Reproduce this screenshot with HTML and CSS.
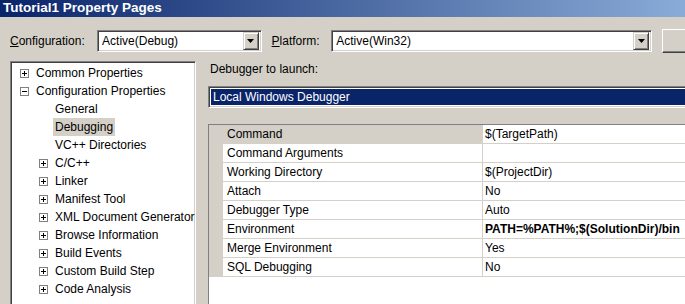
FILE: index.html
```html
<!DOCTYPE html>
<html lang="en">
  <head>
    <meta charset="UTF-8" />
    <title>Tutorial1 Property Pages</title>
    <link rel="stylesheet" href="styles.css">
  </head>
  <body>
    <div class="window">
      <div class="titlebar">Tutorial1 Property Pages</div>

      <div class="toolbar">
        <label class="lbl lbl-config"><u>C</u>onfiguration:</label>
        <div class="combo combo-config">
          <span class="combo-text">Active(Debug)</span>
          <span class="drop"><svg width="7" height="4" viewBox="0 0 7 4"><path d="M0 0h7L3.5 4z" fill="#000"/></svg></span>
        </div>
        <label class="lbl lbl-platform"><u>P</u>latform:</label>
        <div class="combo combo-platform">
          <span class="combo-text">Active(Win32)</span>
          <span class="drop"><svg width="7" height="4" viewBox="0 0 7 4"><path d="M0 0h7L3.5 4z" fill="#000"/></svg></span>
        </div>
        <button class="btn" type="button"></button>
      </div>

      <div class="main">
        <div class="tree">
          <div class="node lvl0"><svg class="exp" width="9" height="9" viewBox="0 0 9 9"><rect x="0.5" y="0.5" width="8" height="8" fill="#fff" stroke="#808080"/><path d="M2 4.5h5M4.5 2v5" stroke="#000"/></svg><span>Common Properties</span></div>
          <div class="node lvl0"><svg class="exp" width="9" height="9" viewBox="0 0 9 9"><rect x="0.5" y="0.5" width="8" height="8" fill="#fff" stroke="#808080"/><path d="M2 4.5h5" stroke="#000"/></svg><span>Configuration Properties</span></div>
          <div class="node leaf"><span>General</span></div>
          <div class="node leaf"><span class="sel">Debugging</span></div>
          <div class="node leaf"><span>VC++ Directories</span></div>
          <div class="node lvl1"><svg class="exp" width="9" height="9" viewBox="0 0 9 9"><rect x="0.5" y="0.5" width="8" height="8" fill="#fff" stroke="#808080"/><path d="M2 4.5h5M4.5 2v5" stroke="#000"/></svg><span>C/C++</span></div>
          <div class="node lvl1"><svg class="exp" width="9" height="9" viewBox="0 0 9 9"><rect x="0.5" y="0.5" width="8" height="8" fill="#fff" stroke="#808080"/><path d="M2 4.5h5M4.5 2v5" stroke="#000"/></svg><span>Linker</span></div>
          <div class="node lvl1"><svg class="exp" width="9" height="9" viewBox="0 0 9 9"><rect x="0.5" y="0.5" width="8" height="8" fill="#fff" stroke="#808080"/><path d="M2 4.5h5M4.5 2v5" stroke="#000"/></svg><span>Manifest Tool</span></div>
          <div class="node lvl1"><svg class="exp" width="9" height="9" viewBox="0 0 9 9"><rect x="0.5" y="0.5" width="8" height="8" fill="#fff" stroke="#808080"/><path d="M2 4.5h5M4.5 2v5" stroke="#000"/></svg><span>XML Document Generator</span></div>
          <div class="node lvl1"><svg class="exp" width="9" height="9" viewBox="0 0 9 9"><rect x="0.5" y="0.5" width="8" height="8" fill="#fff" stroke="#808080"/><path d="M2 4.5h5M4.5 2v5" stroke="#000"/></svg><span>Browse Information</span></div>
          <div class="node lvl1"><svg class="exp" width="9" height="9" viewBox="0 0 9 9"><rect x="0.5" y="0.5" width="8" height="8" fill="#fff" stroke="#808080"/><path d="M2 4.5h5M4.5 2v5" stroke="#000"/></svg><span>Build Events</span></div>
          <div class="node lvl1"><svg class="exp" width="9" height="9" viewBox="0 0 9 9"><rect x="0.5" y="0.5" width="8" height="8" fill="#fff" stroke="#808080"/><path d="M2 4.5h5M4.5 2v5" stroke="#000"/></svg><span>Custom Build Step</span></div>
          <div class="node lvl1"><svg class="exp" width="9" height="9" viewBox="0 0 9 9"><rect x="0.5" y="0.5" width="8" height="8" fill="#fff" stroke="#808080"/><path d="M2 4.5h5M4.5 2v5" stroke="#000"/></svg><span>Code Analysis</span></div>
        </div>

        <div class="panel">
          <div class="panel-label">Debugger to launch:</div>
          <div class="launch">
            <div class="launch-sel">Local Windows Debugger</div>
          </div>

          <div class="grid">
            <div class="row current"><span class="strip"></span><span class="name">Command</span><span class="value">$(TargetPath)</span></div>
            <div class="row"><span class="strip"></span><span class="name">Command Arguments</span><span class="value"></span></div>
            <div class="row"><span class="strip"></span><span class="name">Working Directory</span><span class="value">$(ProjectDir)</span></div>
            <div class="row"><span class="strip"></span><span class="name">Attach</span><span class="value">No</span></div>
            <div class="row"><span class="strip"></span><span class="name">Debugger Type</span><span class="value">Auto</span></div>
            <div class="row"><span class="strip"></span><span class="name">Environment</span><span class="value bold">PATH=%PATH%;$(SolutionDir)/bin</span></div>
            <div class="row"><span class="strip"></span><span class="name">Merge Environment</span><span class="value">Yes</span></div>
            <div class="row"><span class="strip"></span><span class="name">SQL Debugging</span><span class="value">No</span></div>
          </div>
        </div>
      </div>
    </div>
  </body>
</html>
```

FILE: styles.css
```css
body {
  margin: 0;
  width: 685px;
  height: 304px;
  overflow: hidden;
  background: #d4d0c8;
  font-family: "Liberation Sans", Arial, sans-serif;
  font-size: 12px;
  color: #000;
}
.window {
  width: 780px;
  height: 304px;
  overflow: hidden;
}
.titlebar {
  height: 17px;
  line-height: 16px;
  padding-left: 3px;
  color: #fff;
  font-weight: bold;
  font-size: 13.5px;
  background: linear-gradient(to right, #0a246a 0, #a6caf0 840px);
  white-space: nowrap;
}
.toolbar {
  display: flex;
  align-items: center;
  padding: 13px 0 0 10px;
  height: 22px;
}
.lbl {
  white-space: nowrap;
}
.lbl-config {
  width: 89px;
}
.lbl-platform {
  width: 61px;
  margin-left: 10px;
}
.combo {
  box-sizing: border-box;
  height: 22px;
  display: flex;
  align-items: center;
  background: #fff;
  border: 1px solid;
  border-color: #808080 #fff #fff #808080;
  box-shadow: inset 1px 1px #404040, inset -1px -1px #d4d0c8;
  padding: 2px;
}
.combo-config {
  width: 168px;
}
.combo-platform {
  width: 328px;
}
.combo-text {
  flex: 1;
  padding-left: 2px;
  white-space: nowrap;
}
.drop {
  box-sizing: border-box;
  width: 16px;
  height: 18px;
  display: flex;
  align-items: center;
  justify-content: center;
  background: #d4d0c8;
  border: 1px solid;
  border-color: #d4d0c8 #404040 #404040 #d4d0c8;
  box-shadow: inset 1px 1px #fff, inset -1px -1px #808080;
}
.btn {
  margin-left: 10px;
  height: 24px;
  width: 120px;
  box-sizing: border-box;
  background: #d4d0c8;
  border: 1px solid;
  border-color: #fff #404040 #404040 #fff;
  box-shadow: inset -1px -1px #808080;
}
.main {
  display: flex;
  align-items: flex-start;
  padding: 9px 0 0 10px;
}
.tree {
  box-sizing: border-box;
  width: 186px;
  height: 260px;
  background: #fff;
  border: 1px solid;
  border-color: #808080 #fff #fff #808080;
  box-shadow: inset 1px 1px #404040, inset -1px -1px #d4d0c8;
  padding: 2px 0 0 2px;
  overflow: hidden;
}
.node {
  display: flex;
  align-items: center;
  height: 18px;
  white-space: nowrap;
}
.exp {
  flex: none;
  margin-right: 7px;
}
.lvl0 {
  padding-left: 7px;
}
.lvl1 {
  padding-left: 26px;
}
.leaf {
  padding-left: 40px;
}
.leaf span {
  padding: 0 2px;
  line-height: 18px;
}
.sel {
  background: #d4d0c8;
}
.panel {
  margin-left: 12px;
  flex: 1;
}
.panel-label {
  height: 14px;
  line-height: 14px;
  padding: 1px 0 0 2px;
  margin-bottom: 10px;
}
.launch {
  box-sizing: border-box;
  height: 22px;
  background: #fff;
  border: 1px solid;
  border-color: #808080 #fff #fff #808080;
  box-shadow: inset 1px 1px #404040, inset -1px -1px #d4d0c8;
  padding: 2px 0 2px 2px;
}
.launch-sel {
  height: 16px;
  line-height: 16px;
  background: #0a246a;
  color: #fff;
  padding-left: 2px;
  white-space: nowrap;
}
.grid {
  margin-top: 16px;
  background: #fff;
  border-top: 1px solid #808080;
  border-left: 1px solid #808080;
  height: 200px;
}
.row {
  display: flex;
  height: 19px;
  line-height: 19px;
  white-space: nowrap;
}
.strip {
  width: 14px;
  flex: none;
  background: #d4d0c8;
}
.name {
  box-sizing: border-box;
  width: 260px;
  flex: none;
  padding-left: 4px;
  border-bottom: 1px solid #d4d0c8;
  border-right: 1px solid #d4d0c8;
}
.value {
  flex: 1;
  padding-left: 2px;
  border-bottom: 1px solid #d4d0c8;
}
.current .name {
  background: #d4d0c8;
}
.bold {
  font-weight: bold;
}
```
